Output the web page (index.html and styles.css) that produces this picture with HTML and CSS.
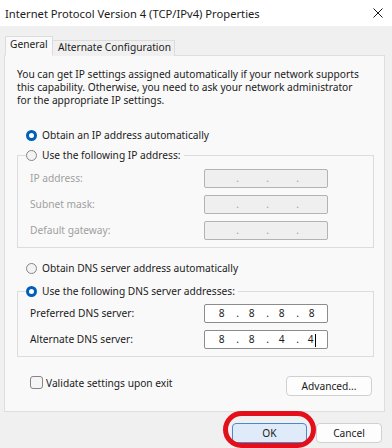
FILE: index.html
```html
<!DOCTYPE html>
<html>
<head>
<meta charset="utf-8">
<title>Internet Protocol Version 4 (TCP/IPv4) Properties</title>
<link rel="stylesheet" href="styles.css">
</head>
<body>
<div class="window">
  <div class="titlebar">
    <span class="title">Internet Protocol Version 4 (TCP/IPv4) Properties</span>
    <svg class="close" width="10" height="10" viewBox="0 0 10 10"><path d="M0.5 0.5L9.5 9.5M9.5 0.5L0.5 9.5" stroke="#1b1b1b" stroke-width="1" fill="none"/></svg>
  </div>
  <div class="tabs">
    <div class="tab active">General</div>
    <div class="tab">Alternate Configuration</div>
  </div>
  <div class="panel">
    <p class="intro">You can get IP settings assigned automatically if your network supports<br>this capability. Otherwise, you need to ask your network administrator<br>for the appropriate IP settings.</p>

    <div class="option first"><span class="radio on"></span>Obtain an IP address automatically</div>
    <fieldset class="group ipgroup">
      <legend><span class="option"><span class="radio"></span>Use the following IP address:</span></legend>
      <div class="fields">
        <span class="label disabled">IP address:</span>
        <span class="ipbox off"><span class="seg"></span><span class="dot">.</span><span class="seg"></span><span class="dot">.</span><span class="seg"></span><span class="dot">.</span><span class="seg"></span></span>
        <span class="label disabled">Subnet mask:</span>
        <span class="ipbox off"><span class="seg"></span><span class="dot">.</span><span class="seg"></span><span class="dot">.</span><span class="seg"></span><span class="dot">.</span><span class="seg"></span></span>
        <span class="label disabled">Default gateway:</span>
        <span class="ipbox off"><span class="seg"></span><span class="dot">.</span><span class="seg"></span><span class="dot">.</span><span class="seg"></span><span class="dot">.</span><span class="seg"></span></span>
      </div>
    </fieldset>

    <div class="option dns-auto"><span class="radio"></span>Obtain DNS server address automatically</div>
    <fieldset class="group dnsgroup">
      <legend><span class="option"><span class="radio on"></span>Use the following DNS server addresses:</span></legend>
      <div class="fields">
        <span class="label">Preferred DNS server:</span>
        <span class="ipbox"><span class="seg">8</span><span class="dot">.</span><span class="seg">8</span><span class="dot">.</span><span class="seg">8</span><span class="dot">.</span><span class="seg">8</span></span>
        <span class="label">Alternate DNS server:</span>
        <span class="ipbox"><span class="seg">8</span><span class="dot">.</span><span class="seg">8</span><span class="dot">.</span><span class="seg">4</span><span class="dot">.</span><span class="seg">4<span class="caret"></span></span></span>
      </div>
    </fieldset>

    <div class="bottom-row">
      <label class="check"><span class="box"></span>Validate settings upon exit</label>
      <span class="button advanced">Advanced...</span>
    </div>
  </div>
  <div class="footer">
    <span class="button ok">OK</span>
    <span class="button cancel">Cancel</span>
  </div>
  <div class="highlight"></div>
</div>
</body>
</html>
```
FILE: styles.css
```css
* { box-sizing: border-box; }
html, body { margin: 0; padding: 0; }
body {
  width: 392px;
  height: 448px;
  overflow: hidden;
  background: #f0f0f0;
  font-family: "Noto Sans", "Open Sans", sans-serif;
  font-size: 10.2px;
  color: #1b1b1b;
}
.window { position: relative; width: 392px; height: 448px; }

.titlebar {
  height: 26px;
  background: #ffffff;
  display: flex;
  align-items: center;
  justify-content: space-between;
  padding: 0 9px 0 5px;
}
.title { font-size: 11.2px; color: #1b1b1b; }
.close { display: block; }

.tabs {
  display: flex;
  align-items: flex-end;
  padding: 10px 0 0 5px;
  margin-bottom: -1px;
}
.tab {
  height: 16px;
  padding: 0 0 0 5px;
  width: 122px;
  background: #f0f0f0;
  border: 1px solid #dcdcdc;
  border-bottom: none;
  border-left: none;
  line-height: 13px;
  white-space: nowrap;
}
.tab.active {
  position: relative;
  z-index: 1;
  width: 48px;
  height: 20px;
  padding: 1px 0 0 4px;
  background: #f9f9f9;
  border: 1px solid #dcdcdc;
  border-bottom: 1px solid #f9f9f9;
}

.panel {
  margin: 0 7px 0 4px;
  height: 357px;
  background: #f9f9f9;
  border: 1px solid #dedede;
  padding: 12px 10px 0 12px;
}
.intro { margin: 0; line-height: 13px; white-space: nowrap; }

.option {
  display: flex;
  align-items: center;
  height: 20px;
  white-space: nowrap;
}
.panel > .option { margin-left: 9px; }
.option.first { margin-top: 18px; }
.option.dns-auto { margin-top: 10px; }

.radio {
  width: 11px;
  height: 11px;
  border-radius: 50%;
  border: 1px solid #858585;
  background: #f3f3f3;
  margin-right: 5px;
  flex: none;
}
.radio.on {
  border: 3.5px solid #0060b8;
  background: #ffffff;
}

.group {
  margin: 0;
  border: 1px solid #dcdcdc;
  padding: 4px 11px 7px 12px;
}
.dnsgroup { margin-top: 3px; padding-top: 3px; }
.group legend {
  margin-left: -4px;
  padding: 0 3px 0 0;
}

.fields {
  display: grid;
  grid-template-columns: 174px 124px;
  grid-auto-rows: 19px;
  row-gap: 7px;
  align-items: center;
}
.label { line-height: 19px; }
.label.disabled { color: #a0a0a0; }

.ipbox {
  height: 19px;
  display: flex;
  align-items: center;
  padding-left: 6.7px;
  background: #ffffff;
  border: 1px solid #8c8c8c;
  border-radius: 2px;
}
.ipbox.off { background: #efefef; border-color: #b3b3b3; color: #a0a0a0; }
.seg { width: 22px; text-align: center; line-height: 17px; white-space: nowrap; }
.ipbox .seg:first-child { margin-left: -1px; }
.dot { width: 8px; padding-left: 2px; text-align: center; line-height: 17px; }
.caret {
  display: inline-block;
  width: 1px;
  height: 13px;
  background: #000;
  vertical-align: middle;
  margin-left: 1px;
}

.bottom-row {
  margin-top: 19px;
  display: flex;
  justify-content: space-between;
  align-items: flex-start;
}
.check {
  display: flex;
  align-items: center;
  margin-left: 13px;
  height: 13px;
}
.check .box {
  width: 13px;
  height: 13px;
  border: 1px solid #858585;
  border-radius: 3px;
  background: #f5f5f5;
  margin-right: 3px;
}

.button {
  display: flex;
  align-items: center;
  justify-content: center;
  height: 20px;
  border: 1px solid #d0d0d0;
  border-radius: 4px;
  background: #fdfdfd;
}
.advanced { width: 86px; margin-right: 2px; }

.footer {
  display: flex;
  justify-content: flex-end;
  gap: 9px;
  padding: 11px 10px 0 0;
}
.ok { width: 75px; background: #dfebf8; border-color: #4a89cf; }
.cancel { width: 66px; }

.highlight {
  position: absolute;
  left: 223px;
  top: 411px;
  width: 93px;
  height: 37px;
  border: 5px solid #e3101c;
  border-radius: 19px;
}
```
